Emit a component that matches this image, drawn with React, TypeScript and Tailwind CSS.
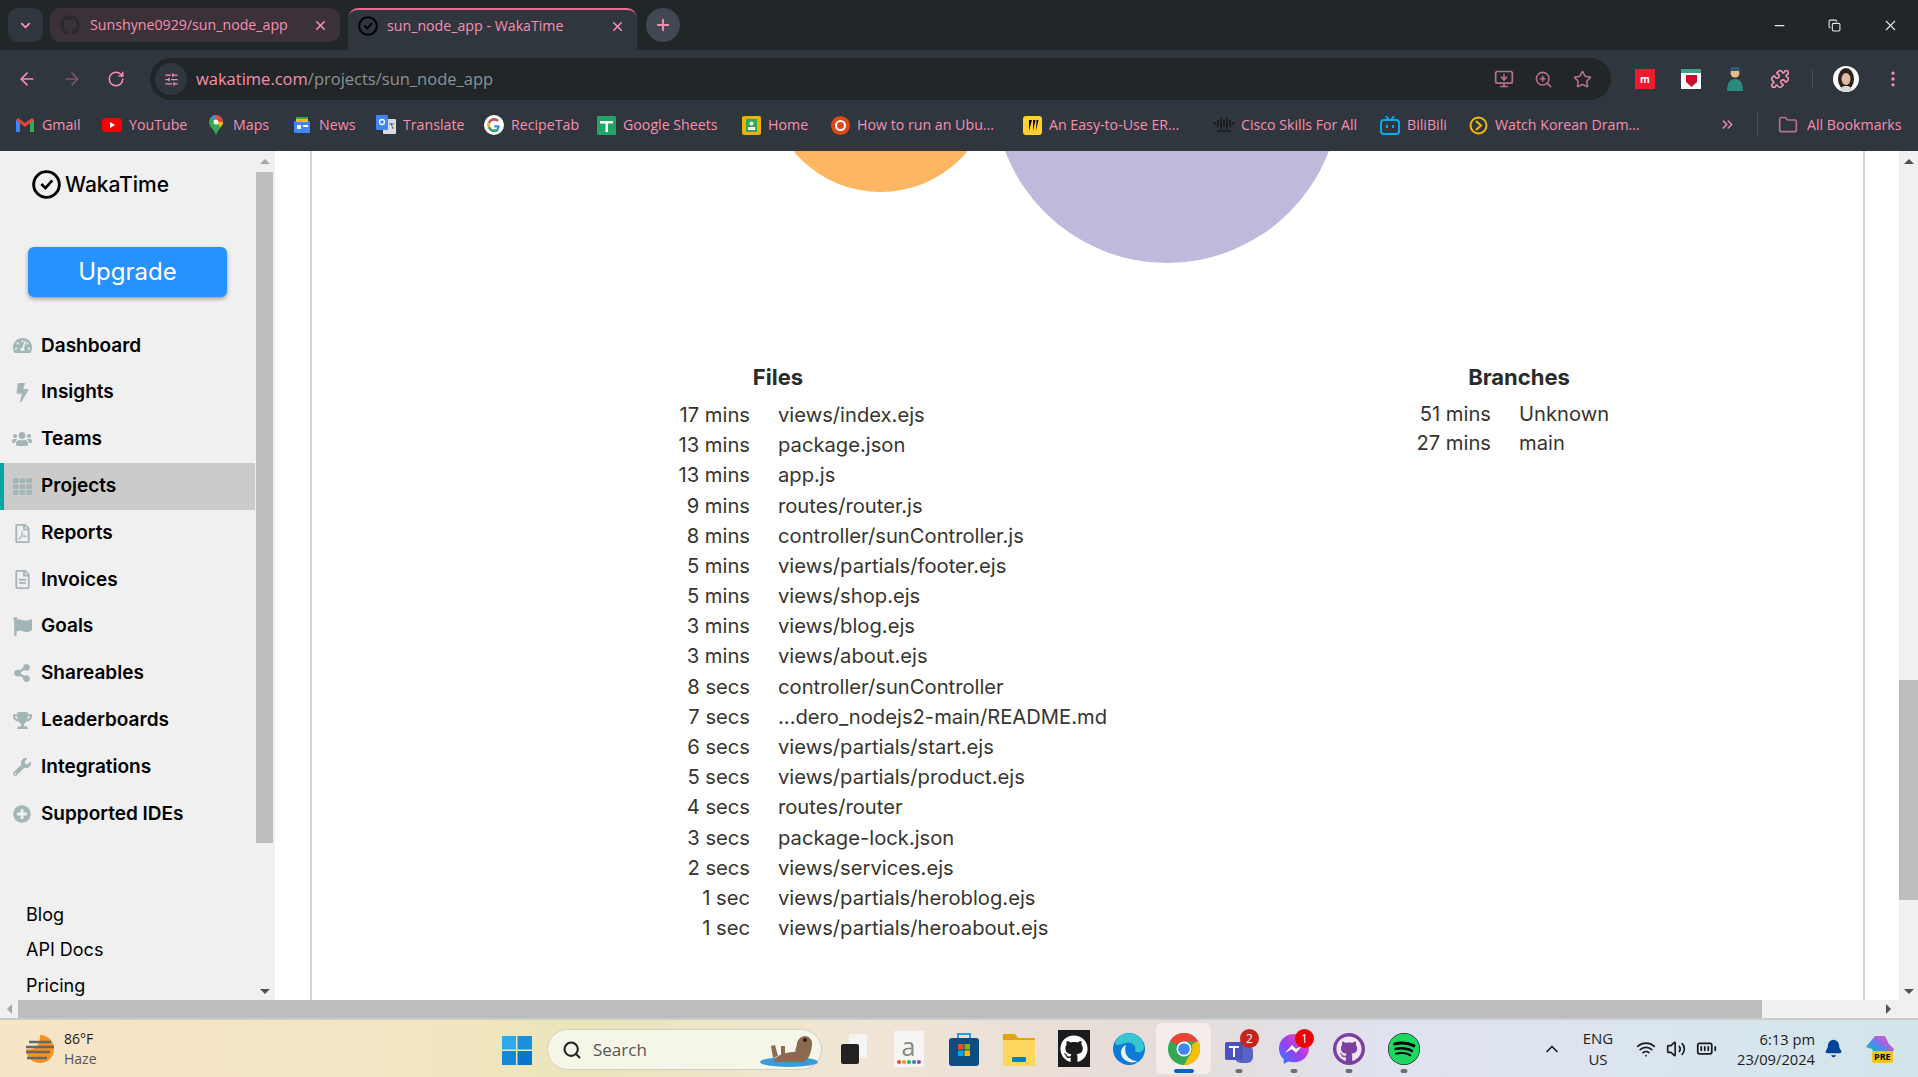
import React from "react";
import {
  FaTachometerAlt,
  FaBolt,
  FaUsers,
  FaTh,
  FaRegFilePdf,
  FaRegFileAlt,
  FaFlag,
  FaShareAlt,
  FaTrophy,
  FaWrench,
  FaPlusCircle,
  FaGithub,
  FaSpotify,
} from "react-icons/fa";
import {
  ArrowLeft,
  ArrowRight,
  RotateCw,
  ChevronDown,
  ChevronUp,
  X,
  Plus,
  Minus,
  Star,
  ZoomIn,
  MonitorDown,
  Puzzle,
  EllipsisVertical,
  Folder,
  ChevronsRight,
  Wifi,
  Volume2,
  BatteryFull,
  Bell,
  Search,
  SlidersHorizontal,
  Copy,
} from "lucide-react";

const navItems = [
  { label: "Dashboard", icon: FaTachometerAlt, size: 19 },
  { label: "Insights", icon: FaBolt, size: 19 },
  { label: "Teams", icon: FaUsers, size: 22 },
  { label: "Projects", icon: FaTh, size: 19, active: true },
  { label: "Reports", icon: FaRegFilePdf, size: 19 },
  { label: "Invoices", icon: FaRegFileAlt, size: 19 },
  { label: "Goals", icon: FaFlag, size: 19 },
  { label: "Shareables", icon: FaShareAlt, size: 18 },
  { label: "Leaderboards", icon: FaTrophy, size: 19 },
  { label: "Integrations", icon: FaWrench, size: 18 },
  { label: "Supported IDEs", icon: FaPlusCircle, size: 18 },
];

const files = [
  ["17 mins", "views/index.ejs"],
  ["13 mins", "package.json"],
  ["13 mins", "app.js"],
  ["9 mins", "routes/router.js"],
  ["8 mins", "controller/sunController.js"],
  ["5 mins", "views/partials/footer.ejs"],
  ["5 mins", "views/shop.ejs"],
  ["3 mins", "views/blog.ejs"],
  ["3 mins", "views/about.ejs"],
  ["8 secs", "controller/sunController"],
  ["7 secs", "...dero_nodejs2-main/README.md"],
  ["6 secs", "views/partials/start.ejs"],
  ["5 secs", "views/partials/product.ejs"],
  ["4 secs", "routes/router"],
  ["3 secs", "package-lock.json"],
  ["2 secs", "views/services.ejs"],
  ["1 sec", "views/partials/heroblog.ejs"],
  ["1 sec", "views/partials/heroabout.ejs"],
];

const branches = [
  ["51 mins", "Unknown"],
  ["27 mins", "main"],
];

const WakaLogo = ({ size, color = "#000" }: { size: number; color?: string }) => (
  <svg width={size} height={size} viewBox="0 0 28 28" fill="none">
    <circle cx="14" cy="14" r="12.4" stroke={color} strokeWidth="2.8" />
    <path d="M9 13.5l4 4 6.5-7.5" stroke={color} strokeWidth="2.6" />
  </svg>
);

const bookmarks: { label: string; w: string; icon: React.ReactNode }[] = [
  {
    label: "Gmail",
    w: "w-[87px]",
    icon: (
      <svg width="18" height="14" viewBox="0 0 18 14">
        <path d="M0 2v12h4V5l5 4 5-4v9h4V2l-2-2-7 5-7-5z" fill="#ea4335" />
        <path d="M0 2v12h4V5z" fill="#4285f4" />
        <path d="M14 5v9h4V2z" fill="#34a853" />
      </svg>
    ),
  },
  {
    label: "YouTube",
    w: "w-[104px]",
    icon: (
      <svg width="20" height="14" viewBox="0 0 20 14">
        <rect width="20" height="14" rx="4" fill="#f00" />
        <path d="M8 4l5 3-5 3z" fill="#fff" />
      </svg>
    ),
  },
  {
    label: "Maps",
    w: "w-[86px]",
    icon: (
      <svg width="14" height="20" viewBox="0 0 14 20">
        <path d="M7 0a7 7 0 0 1 7 7c0 5-5 7-7 13C5 14 0 12 0 7a7 7 0 0 1 7-7z" fill="#34a853" />
        <path d="M2 2.2A7 7 0 0 1 7 0v7z" fill="#4285f4" />
        <path d="M7 0a7 7 0 0 1 7 7H7z" fill="#ea4335" />
        <path d="M14 7c0 2-1 3.500-2.500 5L7 7z" fill="#fbbc04" />
        <circle cx="7" cy="7" r="2.500" fill="#fff" />
      </svg>
    ),
  },
  {
    label: "News",
    w: "w-[84px]",
    icon: (
      <svg width="18" height="18" viewBox="0 0 18 18">
        <rect x="3" y="1" width="12" height="8" fill="#34a853" />
        <rect x="1" y="5" width="16" height="12" rx="1" fill="#4285f4" />
        <rect x="3" y="3" width="12" height="3" fill="#fbbc04" />
        <rect x="4" y="9" width="4" height="4" fill="#fff" />
        <rect x="10" y="9" width="5" height="2" fill="#fff" />
      </svg>
    ),
  },
  {
    label: "Translate",
    w: "w-[108px]",
    icon: (
      <svg width="20" height="20" viewBox="0 0 20 20">
        <rect x="7" y="4" width="13" height="15" rx="1" fill="#d9dce0" />
        <rect width="12" height="15" rx="1" fill="#4285f4" />
        <circle cx="6" cy="7" r="2.500" fill="none" stroke="#fff" strokeWidth="1.300" />
        <path d="M13 9h5M15 8l2 6" stroke="#5f6368" fill="none" />
      </svg>
    ),
  },
  {
    label: "RecipeTab",
    w: "w-[112px]",
    icon: (
      <svg width="20" height="20" viewBox="0 0 20 20">
        <circle cx="10" cy="10" r="10" fill="#fff" />
        <path d="M15.500 10.300H10.200v2.100h3.100c-.4 1.400-1.600 2.200-3.100 2.200a4.600 4.600 0 1 1 3-8l1.500-1.500a6.700 6.700 0 1 0-4.500 11.600c3.500 0 6-2.500 5.300-6.400z" fill="#4285f4" />
        <path d="M4.300 6.900l1.800 1.300a4.600 4.600 0 0 1 7.100-1.800l1.500-1.500a6.700 6.700 0 0 0-10.400 2z" fill="#ea4335" />
        <path d="M4 12.600l1.900-1.400a4.600 4.600 0 0 0 7.100 2.900l1.700 1.400A6.700 6.700 0 0 1 4 12.600z" fill="#34a853" />
        <path d="M3.900 7a6.700 6.700 0 0 0 0 5.700l1.900-1.500a4.600 4.600 0 0 1 0-2.800z" fill="#fbbc04" />
      </svg>
    ),
  },
  {
    label: "Google Sheets",
    w: "w-[145px]",
    icon: (
      <svg width="19" height="19" viewBox="0 0 19 19">
        <rect width="19" height="19" rx="1.500" fill="#23a566" />
        <path d="M3 5h13v2.500h-5V16H8.500V7.500H3z" fill="#fff" />
      </svg>
    ),
  },
  {
    label: "Home",
    w: "w-[89px]",
    icon: (
      <svg width="19" height="19" viewBox="0 0 19 19">
        <rect width="19" height="19" rx="2" fill="#eab308" />
        <rect x="4" y="3" width="11" height="13" fill="#34a853" />
        <circle cx="9.500" cy="7.500" r="2" fill="#fff" />
        <rect x="6" y="11" width="7" height="3" fill="#fff" />
      </svg>
    ),
  },
  {
    label: "How to run an Ubu...",
    w: "w-[192px]",
    icon: (
      <svg width="19" height="19" viewBox="0 0 19 19">
        <circle cx="9.500" cy="9.500" r="9.500" fill="#dd4814" />
        <circle cx="9.500" cy="9.500" r="4.500" fill="none" stroke="#fff" strokeWidth="2" />
      </svg>
    ),
  },
  {
    label: "An Easy-to-Use ER...",
    w: "w-[192px]",
    icon: (
      <svg width="19" height="19" viewBox="0 0 19 19">
        <rect width="19" height="19" rx="3" fill="#ffd02f" />
        <path d="M6 4l3 0-3 11zM10 4l2.500 0-2.500 11zM13.500 4l2 0-2.500 11z" fill="#050038" />
      </svg>
    ),
  },
  {
    label: "Cisco Skills For All",
    w: "w-[166px]",
    icon: (
      <svg width="20" height="16" viewBox="0 0 20 16" stroke="#111" strokeWidth="1.200">
        <path d="M1 5v3M4 3v7M7 0v12M10 3v7M13 0v12M16 3v7M19 5v3M3 14h14" />
      </svg>
    ),
  },
  {
    label: "BiliBili",
    w: "w-[88px]",
    icon: (
      <svg width="20" height="20" viewBox="0 0 20 20" fill="none" stroke="#00aeec" strokeWidth="2">
        <rect x="1" y="5" width="18" height="14" rx="3" />
        <path d="M6 1l3 4M14 1l-3 4M7 10v3M13 10v3" />
      </svg>
    ),
  },
  {
    label: "Watch Korean Dram...",
    w: "w-[256px]",
    icon: (
      <svg width="19" height="19" viewBox="0 0 19 19" fill="none" stroke="#f5b70a" strokeWidth="2">
        <circle cx="9.500" cy="9.500" r="8" />
        <path d="M7 5l5 4.500-5 4.500" />
      </svg>
    ),
  },
];

const ChromeIcon = ({ size }: { size: number }) => (
  <svg width={size} height={size} viewBox="0 0 30 30">
    <circle cx="15" cy="15" r="15" fill="#34a853" />
    <path d="M15 0a15 15 0 0 1 13 7.500H15a7.500 7.500 0 0 0-6.500 3.750L2.010 7.500A15 15 0 0 1 15 0z" fill="#ea4335" />
    <path d="M28 7.500a15 15 0 0 1-13 22.500l6.500-11.250A7.500 7.500 0 0 0 22 11z" fill="#fbbc04" />
    <circle cx="15" cy="15" r="7" fill="#fff" />
    <circle cx="15" cy="15" r="5.500" fill="#4285f4" />
  </svg>
);

const TaskbarDot = ({ wide }: { wide?: boolean }) => (
  <span className={`absolute bottom-[1px] left-1/2 -translate-x-1/2 h-[4px] rounded-full ${wide ? "w-[20px] bg-[#0067c0]" : "w-[7px] bg-[#6b6f73]"}`} />
);

const Badge = ({ n, color }: { n: number; color: string }) => (
  <span className={`absolute top-[6px] right-[7px] w-[19px] h-[19px] rounded-full text-white text-[12px] flex items-center justify-center ${color}`}>{n}</span>
);

const Slot = ({ children, active }: { children?: React.ReactNode; active?: boolean }) => (
  <div className={`relative w-[55px] h-[51px] flex items-center justify-center rounded-md ${active ? "bg-[#f3ecea]" : ""}`}>{children}</div>
);

const App = () => {
  return (
    <div className="w-[1918px] h-[1077px] overflow-hidden flex flex-col bg-white font-['Open_Sans',sans-serif]">
      {/* TAB STRIP */}
      <div className="h-[50px] bg-[#212629] flex items-end pl-[8px] text-[#f78fb0] text-[14.2px]">
        <div className="w-[35px] h-[34px] mb-[8px] rounded-[10px] bg-[#2f363d] flex items-center justify-center">
          <ChevronDown size={15} strokeWidth={3} />
        </div>
        <div className="ml-[7px] w-[290px] h-[34px] mb-[8px] rounded-[10px] bg-[#3a3238] flex items-center pl-[10px] pr-[12px]">
          <FaGithub size={20} className="text-[#2a2a2e]" />
          <span className="ml-[10px] flex-1 whitespace-nowrap">Sunshyne0929/sun_node_app</span>
          <X size={15} strokeWidth={2.5} />
        </div>
        <div className="ml-[8px] w-[289px] h-[42px] rounded-t-[10px] bg-[#2f363d] border-t-[2px] border-[#f0698f] flex items-center pl-[10px] pr-[12px] pb-[8px]">
          <WakaLogo size={20} />
          <span className="ml-[9px] flex-1 whitespace-nowrap">sun_node_app - WakaTime</span>
          <X size={15} strokeWidth={2.5} />
        </div>
        <div className="ml-[9px] w-[34px] h-[34px] mb-[8px] rounded-full bg-[#404952] flex items-center justify-center">
          <Plus size={18} strokeWidth={2.5} />
        </div>
        <div className="flex-1" />
        <div className="flex items-center h-[50px] text-[#e8e8e8] pr-[19px] gap-[41px]">
          <Minus size={15} />
          <Copy size={13} />
          <X size={17} strokeWidth={1.5} />
        </div>
      </div>

      {/* TOOLBAR */}
      <div className="h-[54px] bg-[#2f363d] flex items-start pt-[8px] text-[#f78fb0] shrink-0">
        <div className="w-[150px] h-[42px] flex items-center pl-[17px] gap-[25px]">
          <ArrowLeft size={20} />
          <ArrowRight size={20} className="text-[#7d5468]" />
          <RotateCw size={18} />
        </div>
        <div className="w-[1461px] h-[42px] rounded-full bg-[#212629] flex items-center pl-[5px] pr-[19px]">
          <div className="w-[32px] h-[32px] rounded-full bg-[#2f363d] flex items-center justify-center">
            <SlidersHorizontal size={15} />
          </div>
          <span className="ml-[9px] text-[16.5px] text-[#f78fb0]">wakatime.com</span>
          <span className="text-[16.5px] text-[#8c9296]">/projects/sun_node_app</span>
          <div className="flex-1" />
          <div className="flex items-center gap-[20px] text-[#b8708c]">
            <MonitorDown size={20} />
            <ZoomIn size={19} />
            <Star size={19} />
          </div>
        </div>
        <div className="flex-1 h-[42px] flex items-center pl-[24px]">
          <div className="w-[20px] h-[20px] bg-[#ed1c2e] flex items-center justify-center text-white text-[10px] font-bold">m</div>
          <div className="ml-[26px] w-[20px] h-[20px] bg-white border-t-[4px] border-[#3fa287] flex items-center justify-center">
            <svg width="11" height="12" viewBox="0 0 11 12"><path d="M0 0h11v7l-5.500 5L0 7z" fill="#c8102e" /></svg>
          </div>
          <svg className="ml-[24px]" width="20" height="24" viewBox="0 0 20 24">
            <circle cx="10" cy="6" r="4.500" fill="#e8b98f" />
            <path d="M5 4h10l-1-4H6z" fill="#2d5a6b" />
            <path d="M2 24c0-8 3-12 8-12s8 4 8 12z" fill="#2a8a7e" />
          </svg>
          <Puzzle size={20} className="ml-[25px]" />
          <div className="ml-[22px] w-[1px] h-[20px] bg-[#4a5158]" />
          <svg className="ml-[20px] rounded-full" width="26" height="26" viewBox="0 0 26 26">
            <rect width="26" height="26" fill="#fff" />
            <ellipse cx="13" cy="13" rx="8" ry="11" fill="#2a2320" />
            <ellipse cx="13" cy="13" rx="4.500" ry="6" fill="#e3b9a0" />
            <path d="M6 26c1-5 4-6 7-6s6 1 7 6z" fill="#d9d9d9" />
          </svg>
          <EllipsisVertical size={20} className="ml-[24px]" />
        </div>
      </div>

      {/* BOOKMARKS */}
      <div className="h-[47px] bg-[#2f363d] flex items-start pt-[9px] pl-[15px] text-[#f78fb0] text-[14.2px] shrink-0">
        {bookmarks.map((b) => (
          <div key={b.label} className={`${b.w} h-[24px] flex items-center gap-[7px] whitespace-nowrap shrink-0`}>
            <span className="w-[20px] flex justify-center shrink-0">{b.icon}</span>
            <span>{b.label}</span>
          </div>
        ))}
        <ChevronsRight size={17} className="ml-[-5px] mt-[3px] shrink-0" />
        <div className="ml-[21px] w-[1px] h-[24px] bg-[#4a5158] shrink-0" />
        <Folder size={20} className="ml-[20px] mt-[2px] text-[#b8708c] shrink-0" />
        <span className="ml-[9px] mt-[1px] whitespace-nowrap">All Bookmarks</span>
      </div>

      {/* PAGE */}
      <div className="h-[849px] flex shrink-0 font-['Inter',sans-serif]">
        {/* SIDEBAR */}
        <div className="w-[275px] h-full bg-[#f0f0f0] relative overflow-hidden shrink-0 flex">
          <div className="w-[255px] shrink-0">
            <div className="h-[64px] pl-[32px] pt-[19px] flex items-start gap-[4px]">
              <WakaLogo size={29} />
              <span className="text-[21px] font-medium text-black leading-[29px]">WakaTime</span>
            </div>
            <div className="mt-[32px] ml-[28px] w-[199px] h-[50px] rounded-[6px] bg-[#2692ff] shadow-[0_2px_4px_rgba(0,0,0,0.35)] flex items-center justify-center text-white text-[24px] pb-[1px]">
              Upgrade
            </div>
            <div className="mt-[25.5px]">
              {navItems.map((item) => {
                const Icon = item.icon;
                return (
                  <div
                    key={item.label}
                    className={`h-[46.8px] flex items-center pl-[8px] border-l-[4px] ${item.active ? "bg-[#cbcbcb] border-[#00a8a3]" : "border-transparent"}`}
                  >
                    <span className="w-[20px] flex justify-center">
                      <Icon size={item.size} className="text-[#a2b6b7]" />
                    </span>
                    <span className="ml-[9px] text-[19px] font-semibold text-black">{item.label}</span>
                  </div>
                );
              })}
            </div>
            <div className="mt-[59.5px] pl-[26px] text-[18px] text-black leading-[35.5px]">
              <div>Blog</div>
              <div>API Docs</div>
              <div>Pricing</div>
            </div>
          </div>
          <div className="w-[17px] ml-[1px] h-full flex flex-col items-center">
            <div className="h-[21px] flex items-center">
              <div className="w-0 h-0 border-x-[5px] border-x-transparent border-b-[5px] border-b-[#a8a8a8]" />
            </div>
            <div className="w-full h-[671px] bg-[#bdbdbd]" />
            <div className="flex-1" />
            <div className="h-[18px] flex items-center">
              <div className="w-0 h-0 border-x-[5px] border-x-transparent border-t-[5px] border-t-[#505050]" />
            </div>
          </div>
        </div>

        {/* MAIN */}
        <div className="w-[1643px] h-full flex shrink-0">
          <div className="ml-[35px] w-[1555px] border-x-[2px] border-[#cbd9e4] bg-white">
            {/* cut-off pie charts */}
            <svg className="block" width="1551" height="113" viewBox="0 0 1551 113">
              <circle cx="568.500" cy="-72" r="113" fill="#ffb663" />
              <circle cx="855" cy="-61" r="173" fill="#bfbadb" />
            </svg>
            <div className="flex mt-[96px] text-[20.2px] text-[#37352f]">
              <div className="ml-[328px] w-[276px]">
                <div className="text-center text-[22px] font-bold text-[#2b2b2b] h-[40px] leading-[35px]">Files</div>
                {files.map(([t, name]) => (
                  <div key={name} className="flex h-[30.2px] items-center whitespace-nowrap">
                    <span className="w-[110px] shrink-0 text-right">{t}</span>
                    <span className="ml-[28px] shrink-0">{name}</span>
                  </div>
                ))}
              </div>
              <div className="ml-[475px] w-[256px]">
                <div className="text-center text-[22px] font-bold text-[#2b2b2b] h-[39.5px] leading-[35px]">Branches</div>
                {branches.map(([t, name]) => (
                  <div key={name} className="flex h-[29.4px] items-center whitespace-nowrap">
                    <span className="w-[100px] shrink-0 text-right">{t}</span>
                    <span className="ml-[28px] shrink-0">{name}</span>
                  </div>
                ))}
              </div>
            </div>
          </div>
          <div className="flex-1" />
          <div className="w-[19px] h-full bg-[#f0f0f0] flex flex-col items-center">
            <div className="h-[21px] flex items-center">
              <div className="w-0 h-0 border-x-[5px] border-x-transparent border-b-[5px] border-b-[#505050]" />
            </div>
            <div className="w-full h-[508px]" />
            <div className="w-full h-[220px] bg-[#bdbdbd]" />
            <div className="flex-1" />
            <div className="h-[18px] flex items-center">
              <div className="w-0 h-0 border-x-[5px] border-x-transparent border-t-[5px] border-t-[#505050]" />
            </div>
          </div>
        </div>
      </div>

      {/* HORIZONTAL SCROLLBAR */}
      <div className="h-[20px] bg-[#f0f0f0] border-b-[2px] border-[#c9cccd] flex items-center shrink-0">
        <div className="w-[18px] flex justify-center">
          <div className="w-0 h-0 border-y-[5px] border-y-transparent border-r-[5px] border-r-[#a8a8a8]" />
        </div>
        <div className="w-[1744px] h-full bg-[#bdbdbd]" />
        <div className="flex-1 flex justify-end pr-[27px]">
          <div className="w-0 h-0 border-y-[5px] border-y-transparent border-l-[5px] border-l-[#505050]" />
        </div>
      </div>

      {/* TASKBAR */}
      <div className="flex-1 bg-[linear-gradient(90deg,#f6e5c6_0%,#f4e6c4_20%,#ebe5b9_30%,#f0e5d6_45%,#e6dcd8_60%,#e0e2ef_72%,#dbe5ef_85%,#d2e5ea_100%)] flex items-center font-['Open_Sans',sans-serif] text-[#1c1c1c]">
        <svg className="ml-[24px] shrink-0" width="32" height="32" viewBox="0 0 32 32">
          <path d="M16 2a14 14 0 1 1-14 14c0 0 14 4 14-14z" fill="#f5921e" />
          <path d="M5 9h22M2 14h28M2 19h24M3 25h20" stroke="#676767" strokeWidth="2.500" />
        </svg>
        <div className="ml-[8px] w-[100px] text-[14px] leading-[20px] shrink-0">
          <div>86°F</div>
          <div className="text-[#555]">Haze</div>
        </div>
        <div className="ml-[338px] flex shrink-0 mt-[2px]">
          <svg className="self-center" width="30" height="30" viewBox="0 0 30 30">
            <path d="M0 1h14v13.500H0z" fill="#2fa8ec" />
            <path d="M15.500 1H30v13.500H15.500z" fill="#1b8edc" />
            <path d="M0 16h14v14H0z" fill="#1587d8" />
            <path d="M15.500 16H30v14H15.500z" fill="#0677cd" />
          </svg>
        </div>
        <div className="ml-[15px] mt-[2px] w-[275px] h-[41px] rounded-full bg-[#f5f5e8] border border-[#d0d0c0] flex items-center pl-[14px] shrink-0">
          <Search size={20} strokeWidth={2.5} className="text-[#222]" />
          <span className="ml-[11px] text-[17px] text-[#555]">Search</span>
          <div className="flex-1" />
          <svg className="mr-[2px]" width="60" height="36" viewBox="0 0 60 36">
            <ellipse cx="30" cy="30" rx="29" ry="5" fill="#3a9bd9" />
            <path d="M14 30c4-8 14-10 22-10l2-8c0-4 4-8 8-8s8 4 7 9c-1 8-3 15-9 17H18z" fill="#8a6a50" />
            <path d="M14 26l-2-12 4-1 3 11zM22 24l0-10 4 0 0 9z" fill="#8a6a50" />
            <circle cx="46" cy="8" r="2" fill="#2a1a10" />
          </svg>
        </div>
        <div className="ml-[4px] flex shrink-0">
          <Slot>
            <svg width="26" height="30" viewBox="0 0 26 30">
              <rect x="8" y="0" width="18" height="24" rx="2" fill="#f4f4f4" />
              <rect x="0" y="10" width="18" height="20" rx="2" fill="#222" />
            </svg>
          </Slot>
          <Slot>
            <div className="w-[30px] h-[36px] bg-[#f5f5f5] flex flex-col items-center justify-center">
              <span className="text-[25px] leading-[24px] text-[#888]">a</span>
              <div className="flex gap-[1px] mt-[2px]">
                <span className="w-[4px] h-[4px] rounded-full bg-[#e74c3c]" />
                <span className="w-[4px] h-[4px] rounded-full bg-[#f39c12]" />
                <span className="w-[4px] h-[4px] rounded-full bg-[#27ae60]" />
                <span className="w-[4px] h-[4px] rounded-full bg-[#2980b9]" />
                <span className="w-[4px] h-[4px] rounded-full bg-[#8e44ad]" />
              </div>
            </div>
          </Slot>
          <Slot>
            <svg width="30" height="34" viewBox="0 0 30 34">
              <path d="M9 6V2h12v4" fill="none" stroke="#26a0da" strokeWidth="2" />
              <rect y="6" width="30" height="28" rx="3" fill="#0f4c81" />
              <rect x="9" y="12" width="5.500" height="5.500" fill="#f25022" />
              <rect x="15.500" y="12" width="5.500" height="5.500" fill="#7fba00" />
              <rect x="9" y="18.500" width="5.500" height="5.500" fill="#00a4ef" />
              <rect x="15.500" y="18.500" width="5.500" height="5.500" fill="#ffb900" />
            </svg>
          </Slot>
          <Slot>
            <svg width="32" height="34" viewBox="0 0 32 34">
              <path d="M0 2h12l3 4h17v6H0z" fill="#e3a40b" />
              <rect y="8" width="32" height="26" rx="1" fill="#ffd75e" />
              <rect x="9" y="25" width="14" height="5" rx="1" fill="#0a7ccf" />
            </svg>
          </Slot>
          <Slot>
            <div className="w-[32px] h-[37px] bg-[#1b1b1b] flex items-center justify-center">
              <FaGithub size={28} className="text-white" />
            </div>
          </Slot>
          <Slot>
            <svg width="32" height="32" viewBox="0 0 32 32">
              <circle cx="16" cy="16" r="16" fill="#0c7ad6" />
              <path d="M2 10a15 15 0 0 1 29 4c0 5-6 7-9 4 2-6-4-9-9-8-6 1-9 4-11 0z" fill="#37c6d0" />
              <path d="M13 12c-6 2-7 11-1 15 4 3 9 3 13 1-8 0-15-6-12-16z" fill="#fff" opacity="0.9" />
            </svg>
          </Slot>
          <Slot active>
            <ChromeIcon size={32} />
            <TaskbarDot wide />
          </Slot>
          <Slot>
            <svg width="32" height="32" viewBox="0 0 32 32">
              <circle cx="22" cy="13" r="7" fill="#7b83eb" />
              <rect x="12" y="12" width="18" height="18" rx="6" fill="#5a62c4" />
              <rect x="2" y="9" width="18" height="18" rx="2" fill="#4b53bc" />
              <path d="M6 13h10v2h-4v9h-2v-9H6z" fill="#fff" />
            </svg>
            <Badge n={2} color="bg-[#c4261d]" />
            <TaskbarDot />
          </Slot>
          <Slot>
            <svg width="32" height="32" viewBox="0 0 32 32">
              <defs>
                <linearGradient id="msg" x1="0" y1="1" x2="1" y2="0">
                  <stop offset="0" stopColor="#2f7bff" />
                  <stop offset="0.5" stopColor="#a23cf0" />
                  <stop offset="1" stopColor="#ff5a8c" />
                </linearGradient>
              </defs>
              <path d="M16 1C7.500 1 1 7.200 1 15.500c0 4.300 1.800 8 4.700 10.600V31l4.500-2.500c1.800.5 3.800.8 5.800.8 8.500 0 15-6.200 15-14S24.500 1 16 1z" fill="url(#msg)" />
              <path d="M7 20l7-8 4 4 7-4-7 8-4-4z" fill="#fff" />
            </svg>
            <Badge n={1} color="bg-[#f00000]" />
            <TaskbarDot />
          </Slot>
          <Slot>
            <div className="w-[32px] h-[32px] rounded-full bg-[#7b3fa0] flex items-center justify-center">
              <FaGithub size={26} className="text-[#f0e6f5]" />
            </div>
            <TaskbarDot />
          </Slot>
          <Slot>
            <div className="w-[32px] h-[32px] rounded-full bg-black flex items-center justify-center">
              <FaSpotify size={32} className="text-[#1ed760]" />
            </div>
            <TaskbarDot />
          </Slot>
        </div>
        <ChevronUp size={20} strokeWidth={2} className="ml-[111px] shrink-0" />
        <div className="ml-[11px] w-[50px] text-center text-[15px] leading-[21px] shrink-0">
          <div>ENG</div>
          <div>US</div>
        </div>
        <Wifi size={20} className="ml-[13px] shrink-0" />
        <Volume2 size={20} className="ml-[10px] shrink-0" />
        <BatteryFull size={21} className="ml-[10px] shrink-0" />
        <div className="ml-[11px] w-[87px] text-right text-[14.7px] leading-[20px] shrink-0 whitespace-nowrap">
          <div>6:13 pm</div>
          <div>23/09/2024</div>
        </div>
        <Bell size={19} className="ml-[9px] shrink-0 text-[#00429a] fill-[#00429a]" />
        <div className="relative ml-[23px] w-[28px] h-[28px] shrink-0">
          <svg width="28" height="24" viewBox="0 0 28 24">
            <defs>
              <linearGradient id="cop" x1="0" y1="1" x2="1" y2="0">
                <stop offset="0" stopColor="#3fb950" />
                <stop offset="0.4" stopColor="#2f9be8" />
                <stop offset="0.7" stopColor="#b85be0" />
                <stop offset="1" stopColor="#f0737d" />
              </linearGradient>
            </defs>
            <path d="M9 1h10l4 8 5 5-4 8H10L6 14 0 12z" fill="url(#cop)" />
          </svg>
          <span className="absolute left-[6px] top-[16px] px-[2px] bg-[#f7c312] rounded-[2px] text-[9px] leading-[12px] font-bold text-black">PRE</span>
        </div>
      </div>
    </div>
  );
};

export default App;
